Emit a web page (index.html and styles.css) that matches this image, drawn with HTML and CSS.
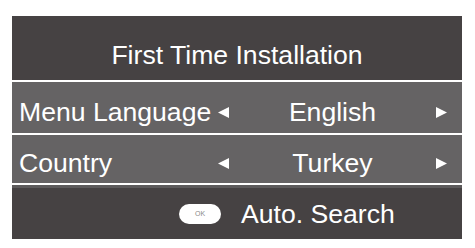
FILE: index.html
```html
<!DOCTYPE html>
<html lang="en">
<head>
    <meta charset="UTF-8">
    <title>First Time Installation</title>
    <link rel="stylesheet" href="styles.css">
</head>
<body>
    <div class="panel">
        <div class="header">First Time Installation</div>

        <div class="row row-first">
            <span class="label">Menu Language</span>
            <svg class="arrow" viewBox="0 0 11 11"><polygon points="0,5.5 11,0 11,11" /></svg>
            <span class="value">English</span>
            <svg class="arrow" viewBox="0 0 11 11"><polygon points="11,5.5 0,0 0,11" /></svg>
        </div>

        <div class="row row-second">
            <span class="label">Country</span>
            <svg class="arrow" viewBox="0 0 11 11"><polygon points="0,5.5 11,0 11,11" /></svg>
            <span class="value">Turkey</span>
            <svg class="arrow" viewBox="0 0 11 11"><polygon points="11,5.5 0,0 0,11" /></svg>
        </div>

        <div class="footer">
            <span class="ok">OK</span>
            <span class="action">Auto. Search</span>
        </div>
    </div>
</body>
</html>
```

FILE: styles.css
```css
body {
    margin: 0;
    background: #ffffff;
    font-family: "Liberation Sans", Arial, sans-serif;
}
.panel {
    margin: 16px 0 0 12px;
    width: 450px;
    color: #ffffff;
    font-size: 26.6px;
    line-height: 30px;
}
.header {
    background: #464243;
    height: 66px;
    box-sizing: border-box;
    padding-top: 24px;
    text-align: center;
    border-bottom: 2px solid #ffffff;
}
.row {
    display: grid;
    grid-template-columns: 199px 11px 1fr 11px;
    align-items: center;
    background: #656364;
    box-sizing: border-box;
    padding-left: 7px;
    padding-right: 15px;
    border-bottom: 2px solid #ffffff;
}
.row-first {
    height: 53px;
    padding-top: 15px;
    padding-bottom: 6px;
}
.row-second {
    height: 50px;
    padding-top: 13px;
    padding-bottom: 5px;
}
.label {
    white-space: nowrap;
}
.value {
    text-align: center;
}
.arrow {
    width: 11px;
    height: 11px;
    fill: #ffffff;
}
.footer {
    display: flex;
    align-items: center;
    background: #464243;
    border-top: 3px solid #5d5b5c;
    height: 54px;
    box-sizing: border-box;
    padding-left: 167px;
    padding-top: 11px;
    padding-bottom: 10px;
    gap: 20px;
}
.ok {
    width: 42px;
    height: 20px;
    border-radius: 10px;
    background: #ffffff;
    color: #8a8a8a;
    font-size: 7px;
    line-height: 20px;
    text-align: center;
}
```
